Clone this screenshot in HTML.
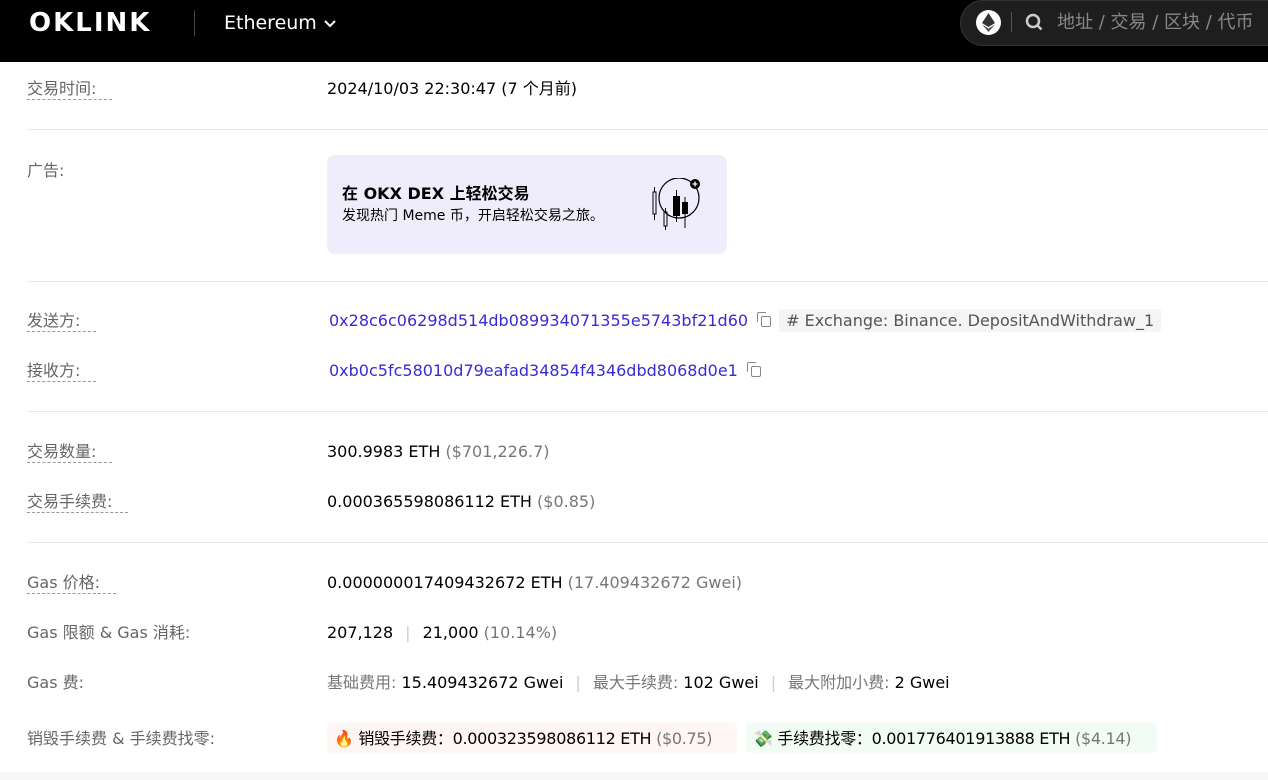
<!DOCTYPE html><html><head><meta charset="utf-8"><style>
body{margin:0;width:1268px;height:780px;overflow:hidden;background:#fff;font-family:"DejaVu Sans","Noto Sans CJK SC",sans-serif;font-size:16px;color:#000;position:relative}
.nav{position:absolute;left:0;top:0;width:1268px;height:62px;background:#000}
.a{position:absolute;white-space:nowrap;line-height:20px}
.lab{left:27px;color:#666}
.dl{border-bottom:1px dashed #999;padding-bottom:1px;padding-right:16px}
.v{left:327px}
.g{color:#777}
.hr{position:absolute;left:27px;right:0;height:1px;background:#e9e9e9}
.link{color:#3a2ad6}
.sep{color:#ccc;margin:0 12px}
.cp{display:inline-block;width:8px;height:9px;border:1.3px solid #888;border-radius:2px;margin-left:13px;vertical-align:-1px;position:relative}
.cp:after{content:"";position:absolute;left:-5px;top:-5px;width:8px;height:9px;border-left:1.3px solid #888;border-top:1.3px solid #888;border-radius:2px 0 0 0}
</style></head><body>
<div class="nav">
<div class="a" style="left:29px;top:10px;color:#fff;font-weight:900;font-size:26px;letter-spacing:2px;line-height:26px;font-family:'DejaVu Sans',sans-serif">OKLINK</div>
<div style="position:absolute;left:194px;top:10px;width:1px;height:26px;background:#444"></div>
<div class="a" style="left:224px;top:12px;color:#fff;font-size:19px;line-height:22px">Ethereum <svg width="14" height="10" viewBox="0 0 14 10"><path d="M2 2l5 5 5-5" stroke="#fff" stroke-width="2" fill="none"/></svg></div>
<div style="position:absolute;left:960px;top:0;width:330px;height:44px;background:#1e1e1e;border:1px solid #333;border-radius:23px"></div>
<div style="position:absolute;left:976px;top:10px;width:25px;height:25px;border-radius:50%;background:#fff"></div>
<svg style="position:absolute;left:982px;top:13px" width="13" height="19" viewBox="0 0 13 19"><path d="M6.5 0L0 10l6.5 4 6.5-4z" fill="#333"/><path d="M0 11.5l6.5 7.5 6.5-7.5-6.5 4z" fill="#555"/></svg>
<div style="position:absolute;left:1011px;top:12px;width:1px;height:20px;background:#555"></div>
<svg style="position:absolute;left:1025px;top:13px" width="20" height="20" viewBox="0 0 20 20"><circle cx="8" cy="8" r="6" stroke="#ccc" stroke-width="2.5" fill="none"/><path d="M12.5 12.5l4 4" stroke="#ccc" stroke-width="2.5"/></svg>
<div class="a" style="left:1057px;top:12px;color:#888;font-size:18px;line-height:22px">地址 / 交易 / 区块 / 代币</div>
</div>

<div class="a lab" style="top:79px"><span class="dl">交易时间:</span></div>
<div class="a v" style="top:79px">2024/10/03 22:30:47 (7 个月前)</div>
<div class="hr" style="top:129px"></div>

<div class="a lab" style="top:161px">广告:</div>
<div style="position:absolute;left:327px;top:155px;width:400px;height:99px;background:#efedfc;border-radius:8px"></div>
<div class="a" style="left:342px;top:184px;font-weight:bold;font-size:16px">在 OKX DEX 上轻松交易</div>
<div class="a" style="left:342px;top:206px;font-size:14px">发现热门 Meme 币，开启轻松交易之旅。</div>
<svg style="position:absolute;left:650px;top:178px" width="52" height="54" viewBox="0 0 52 54"><circle cx="29" cy="20" r="20" stroke="#000" fill="none" stroke-width="1.2"/><circle cx="45" cy="6" r="5" fill="#000"/><path d="M42.5 6h5M45 3.5v5" stroke="#fff" stroke-width="1.3"/><rect x="3" y="14" width="3" height="22" fill="none" stroke="#000"/><path d="M4.5 9v5M4.5 36v6" stroke="#000"/><rect x="14" y="34" width="3" height="14" fill="none" stroke="#000"/><path d="M15.5 30v4M15.5 48v4" stroke="#000"/><rect x="23" y="18" width="7" height="20" fill="#000"/><path d="M26.5 12v6M26.5 38v6" stroke="#000"/><rect x="32" y="24" width="6" height="12" fill="#000"/><path d="M35 19v5M35 36v14" stroke="#000"/></svg>
<div class="hr" style="top:281px"></div>

<div class="a lab" style="top:311px"><span class="dl">发送方:</span></div>
<div class="a v" style="top:311px;left:329px"><span class="link">0x28c6c06298d514db089934071355e5743bf21d60</span><span class="cp"></span> <span style="background:#f5f5f5;color:#555;padding:2px 7px;margin-left:3px"># Exchange: Binance. DepositAndWithdraw_1</span></div>
<div class="a lab" style="top:361px"><span class="dl">接收方:</span></div>
<div class="a v" style="top:361px;left:329px"><span class="link">0xb0c5fc58010d79eafad34854f4346dbd8068d0e1</span><span class="cp"></span></div>
<div class="hr" style="top:411px"></div>

<div class="a lab" style="top:442px"><span class="dl">交易数量:</span></div>
<div class="a v" style="top:442px">300.9983 ETH <span class="g">($701,226.7)</span></div>
<div class="a lab" style="top:492px"><span class="dl">交易手续费:</span></div>
<div class="a v" style="top:492px">0.000365598086112 ETH <span class="g">($0.85)</span></div>
<div class="hr" style="top:542px"></div>

<div class="a lab" style="top:573px"><span class="dl">Gas 价格:</span></div>
<div class="a v" style="top:573px">0.000000017409432672 ETH <span class="g">(17.409432672 Gwei)</span></div>
<div class="a lab" style="top:623px">Gas 限额 &amp; Gas 消耗:</div>
<div class="a v" style="top:623px">207,128<span class="sep">|</span>21,000 <span class="g">(10.14%)</span></div>
<div class="a lab" style="top:673px">Gas 费:</div>
<div class="a v" style="top:673px"><span class="g">基础费用:</span> 15.409432672 Gwei<span class="sep">|</span><span class="g">最大手续费:</span> 102 Gwei<span class="sep">|</span><span class="g">最大附加小费:</span> 2 Gwei</div>
<div class="a lab" style="top:729px">销毁手续费 &amp; 手续费找零:</div>
<div style="position:absolute;left:327px;top:723px;width:410px;height:30px;background:#fdf6f4;border-radius:4px"></div>
<div class="a" style="left:334px;top:729px;letter-spacing:-0.3px">🔥 销毁手续费：0.000323598086112 ETH <span class="g">($0.75)</span></div>
<div style="position:absolute;left:746px;top:723px;width:411px;height:30px;background:#f1fcf4;border-radius:4px"></div>
<div class="a" style="left:753px;top:729px;letter-spacing:-0.3px">💸 手续费找零：0.001776401913888 ETH <span class="g">($4.14)</span></div>
<div style="position:absolute;left:0;top:772px;width:1268px;height:8px;background:#f7f7f7"></div>
</body></html>
